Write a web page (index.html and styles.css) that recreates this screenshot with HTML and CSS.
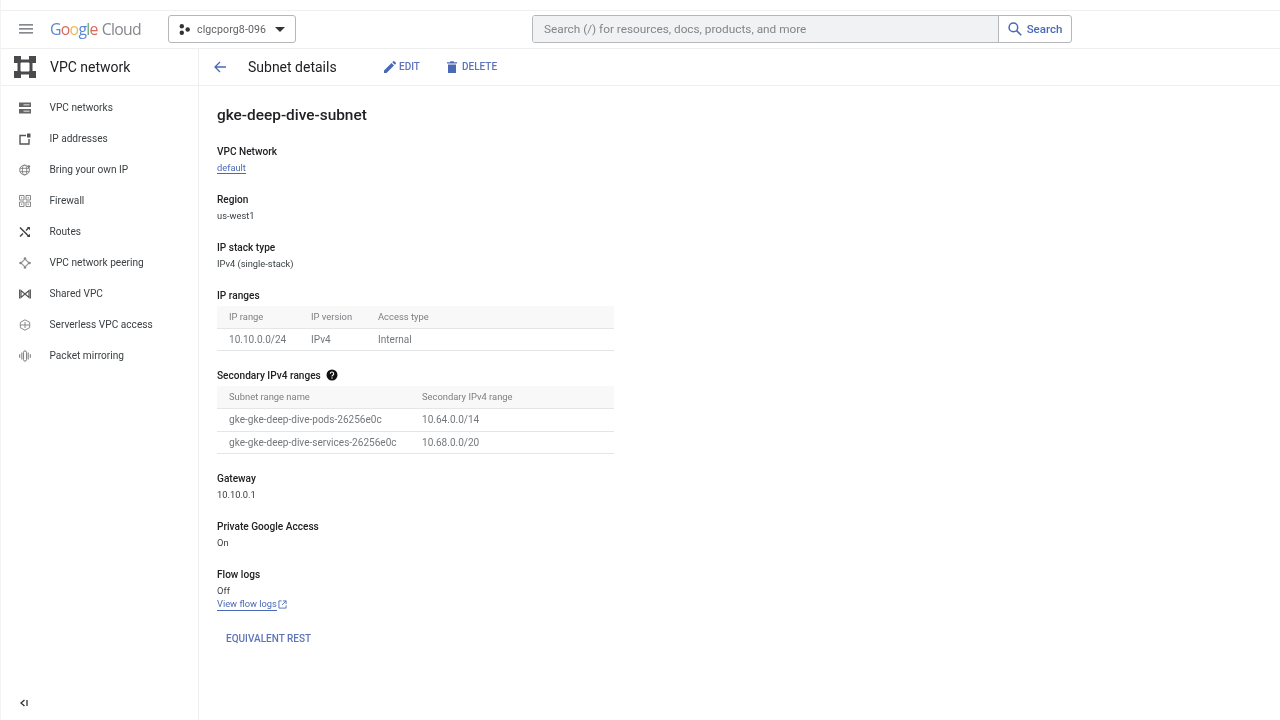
FILE: index.html
```html
<!DOCTYPE html>
<html lang="en">
<head>
<meta charset="utf-8">
<title>Subnet details</title>
<link rel="stylesheet" href="styles.css">
</head>
<body>
<div class="topstrip"></div>
<header class="header">
  <svg class="menu" viewBox="0 0 14 10" width="14" height="10"><path d="M0 .3h14v1.300H0zM0 4.300h14v1.300H0zM0 8.300h14v1.300H0z"/></svg>
  <div class="logo"><span class="g-b">G</span><span class="g-r">o</span><span class="g-y">o</span><span class="g-b">g</span><span class="g-g">l</span><span class="g-r">e</span><span class="logo-cloud">Cloud</span></div>
  <button class="project">
    <svg viewBox="0 0 11 11" width="11" height="11"><circle cx="2.800" cy="2.200" r="2.200"/><circle cx="8.700" cy="5.500" r="2.200"/><circle cx="2.800" cy="8.800" r="2.200"/></svg>
    <span>clgcporg8-096</span>
    <svg class="caret" viewBox="0 0 10 5" width="10" height="5"><path d="M0 0h10L5 5z"/></svg>
  </button>
  <div class="search">
    <div class="search-input">Search (/) for resources, docs, products, and more</div>
    <div class="search-btn">
      <svg viewBox="0 0 14 14" width="14" height="14"><circle cx="5.400" cy="5.400" r="4.300" fill="none" stroke="#4a69b5" stroke-width="1.500"/><path d="M8.600 8.600l4.600 4.600" stroke="#4a69b5" stroke-width="1.600" fill="none"/></svg>
      <span>Search</span>
    </div>
  </div>
</header>
<div class="body">
  <aside class="sidebar">
    <div class="side-head">
      <svg viewBox="0 0 22 22" width="22" height="22" class="vpc"><path d="M0 0h7v7H0zM15 0h7v7h-7zM0 15h7v7H0zM15 15h7v7h-7z"/><path d="M7 3.500h8v3H7zM7 15.500h8v3H7zM3.500 7h3v8h-3zM15.500 7h3v8h-3z"/></svg>
      <span>VPC network</span>
    </div>
    <nav class="nav">
      <a class="nav-item"><svg viewBox="0 0 12 12"><path d="M0 .5h12v4.500H0zM0 7h12v4.500H0z"/><path d="M4.500 2h6v1.500h-6zM4.500 8.500h6V10h-6z" fill="#bbb"/></svg><span>VPC networks</span></a>
      <a class="nav-item"><svg viewBox="0 0 12 12"><path d="M7 2.500H1v8.500h9V6" fill="none" stroke="#555" stroke-width="1.400"/><path d="M8 .5h3.500V4.500H8z" fill="#555"/></svg><span>IP addresses</span></a>
      <a class="nav-item"><svg viewBox="0 0 14 14"><g fill="none" stroke="#777" stroke-width="1"><circle cx="6.500" cy="7" r="5.700"/><ellipse cx="6.500" cy="7" rx="2.600" ry="5.700"/><path d="M1 5h11M1 9h11"/></g><circle cx="11.500" cy="3" r="1.500" fill="#777"/></svg><span>Bring your own IP</span></a>
      <a class="nav-item"><svg viewBox="0 0 12 12"><g fill="none" stroke="#888" stroke-width="1"><path d="M.5.500h4.500v4.500H.5zM7 .5h4.500v4.500H7zM.5 7h4.500v4.500H.5zM7 7h4.500v4.500H7z"/><path d="M2.700 2v1.500M9.200 2v1.500M2.700 8.500V10M9.200 8.500V10"/></g></svg><span>Firewall</span></a>
      <a class="nav-item"><svg viewBox="0 0 12 12"><path d="M1 1.500l9 9M1 10.500l3-3M7 4.500l3-3" fill="none" stroke="#444" stroke-width="1.500"/><path d="M7.800 1H11v3.200zM7.800 11H11V7.800z" fill="#444"/></svg><span>Routes</span></a>
      <a class="nav-item"><svg viewBox="0 0 12 12"><path d="M6 2L10 6 6 10 2 6z" fill="none" stroke="#999" stroke-width="1.200"/><circle cx="6" cy="1.500" r="1.300" fill="#888"/><circle cx="6" cy="10.500" r="1.300" fill="#888"/><circle cx="1.500" cy="6" r="1.300" fill="#888"/><circle cx="10.500" cy="6" r="1.300" fill="#888"/></svg><span>VPC network peering</span></a>
      <a class="nav-item"><svg viewBox="0 0 12 12"><path d="M2 2.500v7L6 6zM10 2.500v7L6 6z" fill="none" stroke="#555" stroke-width="1.200"/><path d="M.6 1.500v9M11.400 1.500v9" stroke="#555" stroke-width="1.100"/></svg><span>Shared VPC</span></a>
      <a class="nav-item"><svg viewBox="0 0 12 12"><path d="M6 .8l4.700 2.600v5.200L6 11.200 1.300 8.600V3.400z" fill="none" stroke="#888" stroke-width="1"/><path d="M1.500 6h9M6 3v6" stroke="#888" stroke-width="1"/></svg><span>Serverless VPC access</span></a>
      <a class="nav-item"><svg viewBox="0 0 14 14"><path d="M.8 5v4M3.300 3v8M10.700 3v8M13.200 5v4" stroke="#777" stroke-width="1.200"/><rect x="5.300" y="1" width="3.400" height="12" rx="1.700" fill="none" stroke="#777" stroke-width="1.100"/></svg><span>Packet mirroring</span></a>
    </nav>
    <div class="collapse"><svg viewBox="0 0 8 8" width="8" height="8"><path d="M4.500 1L1 4l3.500 3" fill="none" stroke="#333" stroke-width="1.300"/><path d="M7 1v6" stroke="#333" stroke-width="1.300"/></svg></div>
  </aside>
  <main class="main">
    <div class="toolbar">
      <svg class="back" viewBox="0 0 12 12" width="12" height="12"><path d="M6 1L1 6l5 5M1 6h11" fill="none" stroke="#4a69b5" stroke-width="1.300"/></svg>
      <h1 class="page-title">Subnet details</h1>
      <a class="tool edit"><svg viewBox="0 0 12 12" width="12" height="12"><path d="M0 12V9.500L7.500 2 10 4.500 2.500 12zM8.300 1.200L9.300.2a.7.7 0 0 1 1 0l1.500 1.500a.7.7 0 0 1 0 1l-1 1z" fill="#4a69b5"/></svg><span>EDIT</span></a>
      <a class="tool delete"><svg viewBox="0 0 10 12" width="10" height="12"><path d="M1 3.500h8V12H1zM0 1.300h3L3.500.3h3l.5 1h3v1.200H0z" fill="#4a69b5"/></svg><span>DELETE</span></a>
    </div>
    <div class="content">
      <h2 class="subnet">gke-deep-dive-subnet</h2>
      <div class="field"><div class="label">VPC Network</div><div class="value"><a class="link">default</a></div></div>
      <div class="field"><div class="label">Region</div><div class="value">us-west1</div></div>
      <div class="field"><div class="label">IP stack type</div><div class="value">IPv4 (single-stack)</div></div>
      <div class="label table-label">IP ranges</div>
      <table class="table t1">
        <thead><tr><th>IP range</th><th>IP version</th><th>Access type</th></tr></thead>
        <tbody><tr><td>10.10.0.0/24</td><td>IPv4</td><td>Internal</td></tr></tbody>
      </table>
      <div class="label table-label second">Secondary IPv4 ranges
        <svg viewBox="0 0 12 12" width="12" height="12"><circle cx="6" cy="6" r="5.500" fill="#111"/><path d="M4.300 4.700a1.700 1.700 0 1 1 2.500 1.500c-.6.400-.8.600-.8 1.200" fill="none" stroke="#fff" stroke-width="1.100"/><circle cx="6" cy="9" r=".7" fill="#fff"/></svg>
      </div>
      <table class="table t2">
        <thead><tr><th>Subnet range name</th><th>Secondary IPv4 range</th></tr></thead>
        <tbody>
          <tr><td>gke-gke-deep-dive-pods-26256e0c</td><td>10.64.0.0/14</td></tr>
          <tr><td>gke-gke-deep-dive-services-26256e0c</td><td>10.68.0.0/20</td></tr>
        </tbody>
      </table>
      <div class="field gateway"><div class="label">Gateway</div><div class="value">10.10.0.1</div></div>
      <div class="field"><div class="label">Private Google Access</div><div class="value">On</div></div>
      <div class="field flow"><div class="label">Flow logs</div><div class="value">Off</div>
        <div class="value flow-link"><a class="link">View flow logs</a>
          <svg viewBox="0 0 10 10" width="9" height="9"><path d="M4 1H1v8h8V6M5.500 1H9v3.500M9 1L4.500 5.500" fill="none" stroke="#4a69b5" stroke-width="1"/></svg>
        </div>
      </div>
      <a class="rest">EQUIVALENT REST</a>
    </div>
  </main>
</div>
</body>
</html>
```
FILE: styles.css
```css
* { box-sizing: border-box; }
html, body { margin: 0; padding: 0; height: 720px; overflow: hidden; background: #fff; }
body { font-family: Roboto, "Liberation Sans", sans-serif; color: #3c4043; display: flex; flex-direction: column; border-left: 1px solid #f3f3f4; filter: blur(.45px); }

.topstrip { height: 11px; border-bottom: 1px solid #f0f0f1; flex: none; }
.header { height: 38px; flex: none; display: flex; align-items: center; border-bottom: 1px solid #efeff0; padding-left: 18px; padding-bottom: 1px; }
.menu { fill: #5f6368; flex: none; }
.logo { margin-left: 17px; width: 101px; font-family: "Open Sans", sans-serif; font-size: 15.800px; letter-spacing: -.7px; white-space: nowrap; flex: none; padding-bottom: 1px; }
.g-b { color: #5b87d8; } .g-r { color: #d9695f; } .g-y { color: #e8bd4f; } .g-g { color: #66a96f; }
.logo-cloud { color: #85888c; margin-left: 4px; }
.project { margin-left: 17px; width: 128px; height: 28px; flex: none; display: flex; align-items: center; padding: 0 10px; background: #fff; border: 1px solid #b5b7ba; border-radius: 3px; font: 400 10.600px Roboto, sans-serif; color: #5f6368; }
.project svg { fill: #333; flex: none; }
.project span { margin-left: 7px; flex: 1; text-align: left; letter-spacing: .1px; }
.search { margin-left: 236px; width: 540px; height: 28px; flex: none; display: flex; border: 1px solid #b5b7ba; border-radius: 3px; overflow: hidden; }
.search-input { flex: 1; background: #f1f2f3; font-size: 11.800px; color: #80868b; display: flex; align-items: center; padding-left: 11px; border-right: 1px solid #b5b7ba; }
.search-btn { width: 72px; flex: none; display: flex; align-items: center; justify-content: center; gap: 5px; font-size: 11.500px; font-weight: 500; color: #4a69b5; }

.body { flex: 1; display: flex; min-height: 0; }
.sidebar { width: 198px; flex: none; border-right: 1px solid #efeff0; display: flex; flex-direction: column; }
.side-head { height: 37px; display: flex; align-items: center; padding: 0 0 1px 13px; gap: 14px; font-size: 14px; color: #202124; flex: none; border-bottom: 1px solid #efeff0; }
.vpc { fill: #4a4a4c; }
.nav { display: flex; flex-direction: column; padding-top: 6px; flex: 1; }
.nav-item { height: 31px; display: flex; align-items: center; font-size: 10.150px; color: #3c4043; }
.nav-item svg { flex: none; width: 14px; height: 12px; margin-left: 17px; margin-right: 17.500px; fill: #666; }
.collapse { height: 34px; flex: none; padding-left: 19px; display: flex; align-items: center; }

.main { flex: 1; display: flex; flex-direction: column; }
.toolbar { height: 37px; flex: none; display: flex; align-items: center; padding: 0 0 1px 15px; border-bottom: 1px solid #efeff0; }
.page-title { margin: 0 0 0 22px; font-size: 14px; font-weight: 400; color: #202124; width: 136px; flex: none; }
.tool { display: flex; align-items: center; gap: 3px; font-size: 10px; font-weight: 500; color: #5f74b8; }
.delete { margin-left: 27px; gap: 5px; }

.content { padding: 21px 0 0 18px; }
.subnet { margin: 0 0 21px; font-size: 15.400px; font-weight: 500; color: #202124; line-height: 17px; }
.field { height: 48px; }
.label { font-size: 10.100px; font-weight: 500; color: #202124; line-height: 14px; }
.value { font-size: 9.300px; line-height: 13px; margin-top: 2px; color: #3c4043; }
.link { color: #4a69b5; border-bottom: 1px solid #4a69b5; }
.table-label { height: 17px; }
.second { display: flex; align-items: flex-start; gap: 5px; height: 17px; margin-top: 18px; }
.table { border-collapse: collapse; width: 397px; font-size: 10.050px; table-layout: fixed; }
.table th { background: #f8f8f8; height: 22px; font-size: 9.400px; font-weight: 400; color: #7b7f83; text-align: left; padding: 0 0 0 12px; border-bottom: 1px solid #e4e5e6; }
.table td { height: 22px; color: #74787c; padding: 0 0 0 12px; border-bottom: 1px solid #e4e5e6; white-space: nowrap; }
.t1 th:nth-child(1) { width: 82px; }
.t1 th:nth-child(2) { width: 67px; }
.t2 th:nth-child(1) { width: 193px; height: 23px; }
.t2 th:nth-child(2) { height: 23px; }
.t2 tr:first-child td { height: 23px; padding-bottom: 1px; }
.gateway { margin-top: 18px; }
.flow { height: 50px; }
.flow .flow-link { margin-top: 0; display: flex; align-items: center; gap: 1px; }
.rest { display: block; margin: 14px 0 0 9px; font-size: 10px; font-weight: 500; color: #5f74b8; line-height: 14px; }
```
